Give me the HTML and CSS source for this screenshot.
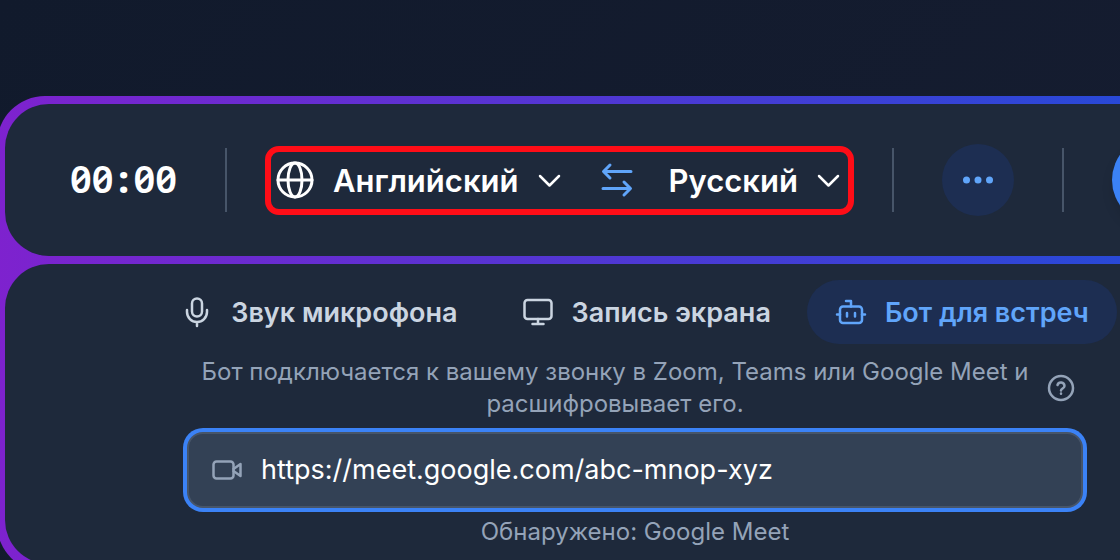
FILE: index.html
```html
<!DOCTYPE html>
<html lang="ru">
<head>
    <meta charset="UTF-8">
    <meta name="viewport" content="width=device-width, initial-scale=1.0">
    <title>Запись встречи</title>
    <link rel="stylesheet" href="styles.css">
</head>
<body>
    <main class="recorder">
        <section class="toolbar">
            <time class="timer">00<span class="colon">:</span>00</time>
            <span class="divider"></span>

            <div class="languages">
                <label class="language" for="source-lang">
                    <svg class="globe" viewBox="0 0 40 40" aria-label="Язык речи">
                        <circle cx="20" cy="20" r="17"/>
                        <ellipse cx="20" cy="20" rx="7" ry="17"/>
                        <path d="M3 20h34"/>
                    </svg>
                    <select id="source-lang" name="source-lang">
                        <option selected>Английский</option>
                        <option>Русский</option>
                    </select>
                    <svg class="chevron" viewBox="0 0 28 28"><path d="M3 10l9.500 9.500L22 10"/></svg>
                </label>
                <button class="swap" type="button" aria-label="Поменять языки">
                    <svg viewBox="0 0 36 36"><path d="M32 9.500H5M11 3L4.500 9.500 11 16M4 26.500h27M25 20l6.500 6.500L25 33"/></svg>
                </button>
                <label class="language" for="target-lang">
                    <select id="target-lang" name="target-lang" aria-label="Язык перевода">
                        <option selected>Русский</option>
                        <option>Английский</option>
                    </select>
                    <svg class="chevron" viewBox="0 0 28 28"><path d="M3 10l9.500 9.500L22 10"/></svg>
                </label>
            </div>

            <span class="divider"></span>
            <button class="more" type="button" aria-label="Ещё">
                <svg viewBox="0 0 36 36"><circle cx="6.500" cy="18" r="3.500"/><circle cx="18" cy="18" r="3.500"/><circle cx="29.500" cy="18" r="3.500"/></svg>
            </button>
            <span class="divider"></span>
            <button class="record" type="button" aria-label="Начать запись"></button>
        </section>

        <section class="source">
            <div class="tabs">
                <button class="tab" type="button">
                    <svg viewBox="0 0 32 32">
                        <rect x="11" y="2.500" width="10" height="18" rx="5"/>
                        <path d="M6 14v2a10 10 0 0 0 20 0v-2M16 26v4"/>
                    </svg>
                    Звук микрофона
                </button>
                <button class="tab" type="button">
                    <svg viewBox="0 0 32 32">
                        <rect x="2.500" y="4" width="27" height="19" rx="3"/>
                        <path d="M16 23v5M10.500 28h11"/>
                    </svg>
                    Запись экрана
                </button>
                <button class="tab tab-active" type="button">
                    <svg viewBox="0 0 32 32">
                        <rect x="5" y="10.500" width="22" height="16.500" rx="3"/>
                        <path d="M16 10.500V5h-5M2 18.500h3M27 18.500h3M12 17v3.500M20 17v3.500"/>
                    </svg>
                    Бот для встреч
                </button>
            </div>

            <div class="meeting">
                <div class="hint">
                    <p>Бот подключается к вашему звонку в Zoom, Teams или Google Meet и расшифровывает его.</p>
                    <button class="help" type="button" aria-label="Справка">
                        <svg viewBox="0 0 32 32">
                            <circle cx="16" cy="16" r="12"/>
                            <path d="M12.500 13a3.600 3.600 0 0 1 7 1c0 2.400-3.500 2.600-3.500 4.500M16 21.500v.200"/>
                        </svg>
                    </button>
                </div>
                <label class="link-field" for="meeting-url">
                    <svg viewBox="0 0 32 32">
                        <rect x="2.500" y="7.500" width="20" height="17" rx="3"/>
                        <path d="M22.500 15l7-5v12l-7-5"/>
                    </svg>
                    <input id="meeting-url" type="text" value="https://meet.google.com/abc-mnop-xyz" aria-label="Ссылка на встречу">
                </label>
                <p class="detected">Обнаружено: Google Meet</p>
            </div>
        </section>
    </main>
</body>
</html>
```
FILE: styles.css
```css
* {
    box-sizing: border-box;
    margin: 0;
    padding: 0;
}

body {
    font-family: Inter, "Liberation Sans", sans-serif;
    min-height: 100vh;
    padding-top: 96px;
    overflow: hidden;
    background: linear-gradient(135deg, #111a2c 0%, #161d31 100%);
    color: #fff;
}

button,
select,
input {
    font: inherit;
    color: inherit;
    background: none;
    border: none;
    outline: none;
}

button,
select {
    cursor: pointer;
}

svg {
    display: block;
    flex: none;
    fill: none;
    stroke: currentColor;
    stroke-width: 2.5;
    stroke-linecap: round;
    stroke-linejoin: round;
}

/* the panel runs past both edges of the window */
.recorder {
    display: flex;
    flex-direction: column;
    gap: 8px;
    margin: 0 -153px 0 -3px;
    padding: 8px;
    border-radius: 48px;
    background: linear-gradient(90deg, #7e22ce, #1d4ed8);
}

.toolbar,
.source {
    background-color: #1e293b;
    border-radius: 44px;
}

.toolbar {
    display: flex;
    align-items: center;
    justify-content: center;
    gap: 48px;
    padding: 32px 0;
}

.timer {
    display: flex;
    padding-bottom: 4px;
    font-family: "Noto Sans", "DejaVu Sans Mono", monospace;
    font-size: 38px;
    font-weight: 600;
    font-feature-settings: "zero";
    line-height: 40px;
}

.colon {
    width: 20px;
    font-weight: 800;
    text-align: center;
}

.divider {
    width: 2px;
    height: 64px;
    background-color: #475569;
}

.languages {
    position: relative;
    display: flex;
    align-items: center;
    gap: 34px;
}

/* red highlight around the language pair */
.languages::after {
    content: "";
    position: absolute;
    inset: -14px -10px;
    border: 6px solid #ff0d17;
    border-radius: 14px;
    pointer-events: none;
}

.language {
    display: flex;
    align-items: center;
    gap: 18px;
}

.language select {
    appearance: none;
    field-sizing: content;
    font-size: 31px;
    font-weight: 600;
    line-height: 41px;
}

.globe {
    width: 40px;
    height: 40px;
    stroke-width: 3;
}

.chevron {
    width: 28px;
    height: 28px;
}

.swap svg {
    width: 36px;
    height: 36px;
    color: #60a5fa;
    stroke-width: 3;
}

.more {
    display: grid;
    place-items: center;
    width: 72px;
    height: 72px;
    border-radius: 50%;
    background-color: #1d2e52;
    color: #60a5fa;
}

.more svg {
    width: 36px;
    height: 36px;
    fill: currentColor;
    stroke: none;
}

.record {
    width: 88px;
    height: 88px;
    border-radius: 50%;
    background-color: #3b82f6;
    box-shadow: 0 8px 12px rgba(0, 0, 0, 0.1);
}

.source {
    display: flex;
    flex-direction: column;
    align-items: center;
    gap: 12px;
    padding: 16px;
}

.tabs {
    display: flex;
    gap: 8px;
}

.tab {
    display: flex;
    align-items: center;
    gap: 18px;
    height: 64px;
    padding: 0 28px;
    border-radius: 32px;
    color: #cbd5e1;
    font-size: 27px;
    font-weight: 600;
    white-space: nowrap;
}

.tab svg,
.help svg,
.link-field svg {
    width: 32px;
    height: 32px;
}

.tab-active {
    background-color: #1d2e52;
    color: #60a5fa;
}

.meeting {
    width: 896px;
    color: #94a3b8;
    font-size: 24px;
    line-height: 32px;
    text-align: center;
}

.hint {
    display: flex;
    align-items: center;
    padding-right: 4px;
}

.hint p {
    flex: 1;
}

.help {
    display: grid;
    place-items: center;
    width: 36px;
}

.link-field {
    display: flex;
    align-items: center;
    gap: 18px;
    height: 76px;
    margin: 12px 0 8px;
    padding: 0 22px;
    border: 2px solid #475569;
    border-radius: 16px;
    background-color: #334155;
    box-shadow: 0 0 0 4px #3b82f6;
}

.link-field input {
    flex: 1;
    min-width: 0;
    color: #fff;
    font-size: 27px;
}
```
